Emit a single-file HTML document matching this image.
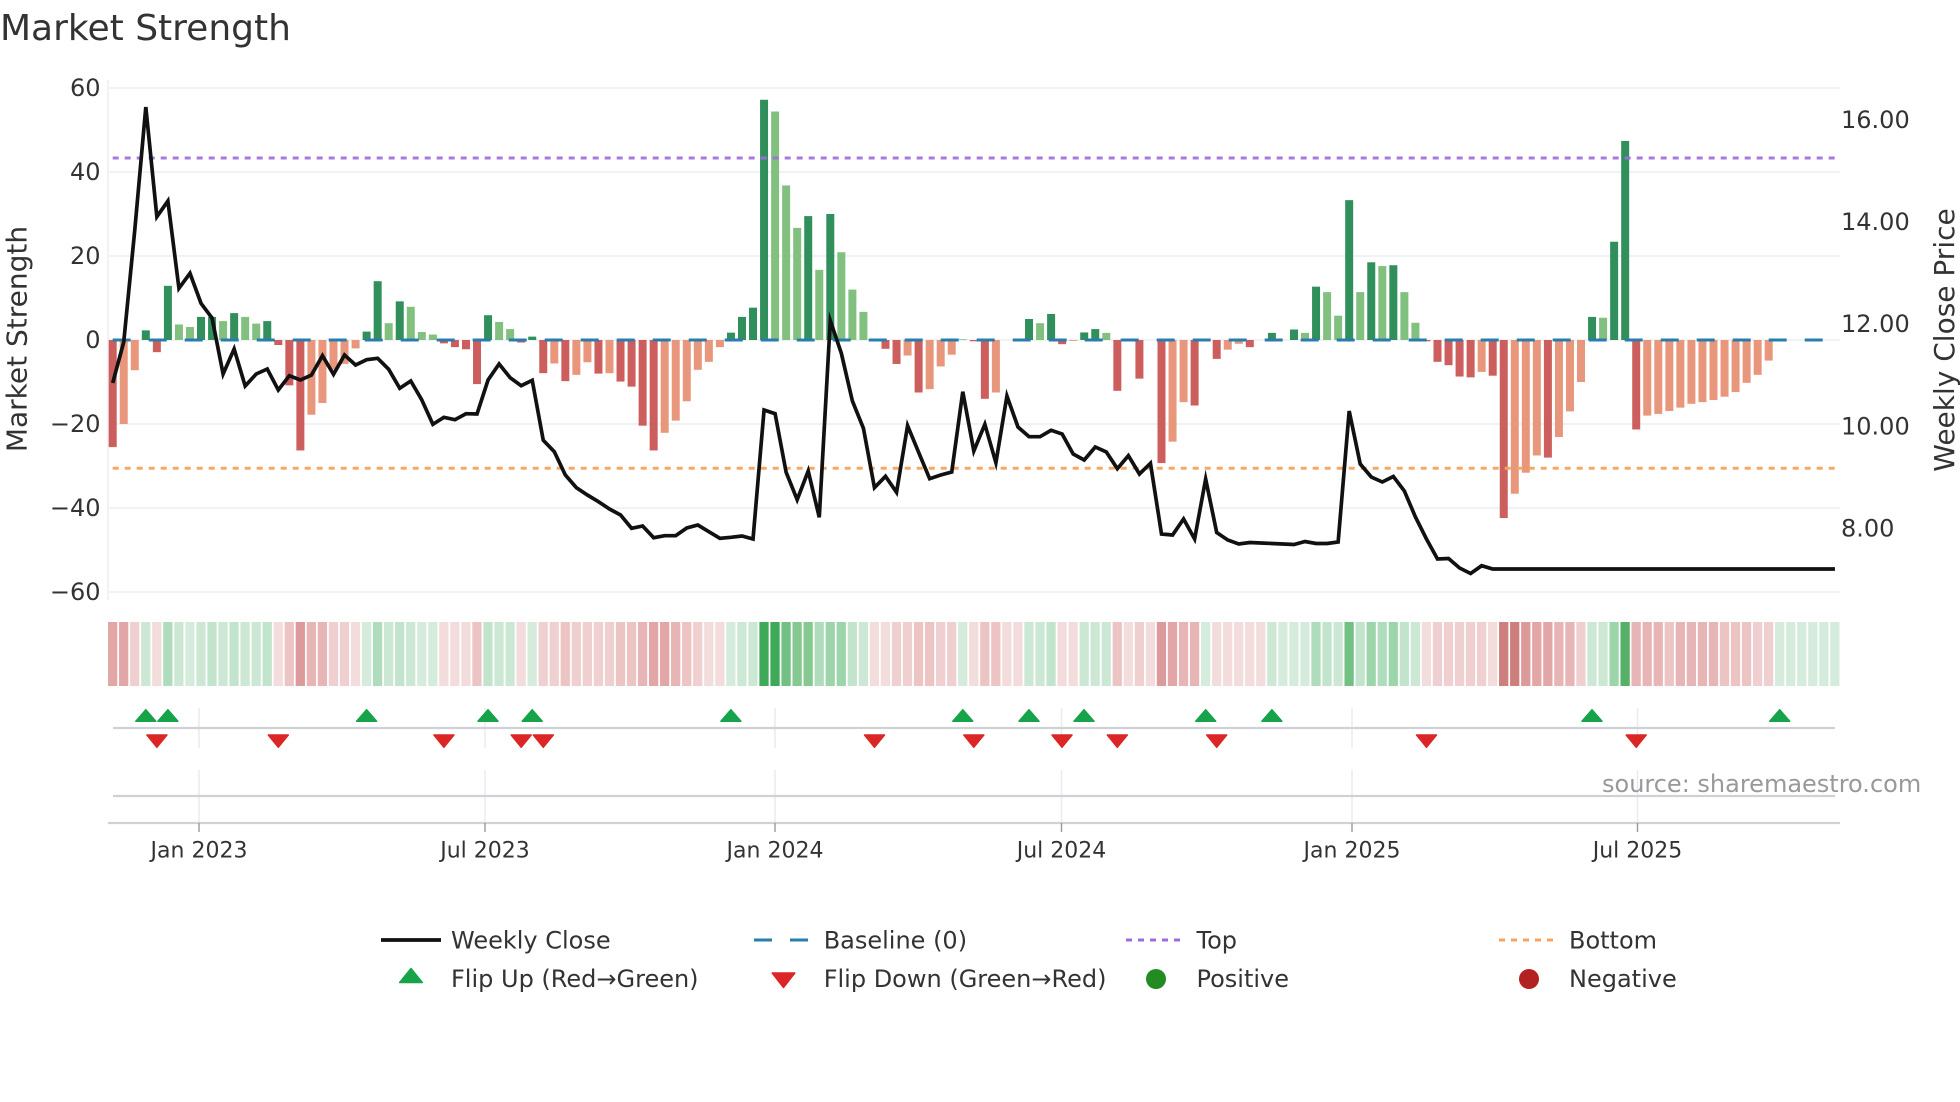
<!DOCTYPE html>
<html>
<head>
<meta charset="utf-8">
<title>Market Strength</title>
<style>
html,body{margin:0;padding:0;background:#fff;width:1960px;height:1102px;overflow:hidden}
svg{display:block;font-family:"DejaVu Sans","Liberation Sans",sans-serif}
text{fill:#333}
.bars rect{width:.7246px}
.r{fill:#cc5e5e}.o{fill:#e8977c}.g{fill:#318f5c}.l{fill:#82c080}
.s rect{width:.84px;height:1px}
.s .a{fill:#f3dcdc}.s .b{fill:#efcfcf}.s .c{fill:#ecc4c4}.s .d{fill:#e7b5b5}.s .e{fill:#e2a6a6}.s .f{fill:#dc9a9a}.s .h{fill:#cc7f7c}
.s .p{fill:#d5ecdd}.s .q{fill:#cce8d5}.s .u{fill:#c2e4cd}.s .w{fill:#aedcbc}.s .t{fill:#9dd5ab}.s .y{fill:#85c890}.s .v{fill:#72c083}.s .z{fill:#56b068}.s .x{fill:#3fa95a}
.yt{font-size:24px;text-anchor:end}
.rt{font-size:24px}
.xt{font-size:22px;text-anchor:middle}
.lg{font-size:24px}
</style>
</head>
<body>
<svg width="1960" height="1102" viewBox="0 0 1960 1102" xmlns="http://www.w3.org/2000/svg">
<rect width="1960" height="1102" fill="#fff"/>
<text x="0" y="40" font-size="36">Market Strength</text>

<!-- grid -->
<g stroke="#f0f2f5" stroke-width="2.2" fill="none">
<path d="M108 88H1840M108 172H1840M108 256H1840M108 340H1840M108 424H1840M108 508H1840M108 592H1840"/>
<path d="M108 80V600"/>
</g>

<!-- bars -->
<g class="bars" transform="translate(108.7 340) scale(11.04 4.2)">
<g class="r">
<rect x="0" height="25.5"/><rect x="4" height="2.9"/><rect x="15" height="1.2"/><rect x="16" height="10.8"/><rect x="17" height="26.3"/><rect x="30" height=".8"/><rect x="31" height="1.7"/><rect x="32" height="2.2"/><rect x="33" height="10.5"/><rect x="37" height=".6"/><rect x="39" height="7.9"/><rect x="41" height="9.8"/><rect x="44" height="8"/><rect x="46" height="9.9"/><rect x="47" height="11.1"/><rect x="48" height="20.4"/><rect x="49" height="26.3"/><rect x="70" height="2.1"/><rect x="71" height="5.7"/><rect x="73" height="12.5"/><rect x="78" height=".3"/><rect x="79" height="14"/><rect x="86" height="1"/><rect x="91" height="12.1"/><rect x="93" height="9.2"/><rect x="95" height="29.3"/><rect x="98" height="15.6"/><rect x="100" height="4.5"/><rect x="103" height="1.7"/><rect x="119" height=".3"/><rect x="120" height="5.2"/><rect x="121" height="6"/><rect x="122" height="8.7"/><rect x="123" height="8.9"/><rect x="125" height="8.5"/><rect x="126" height="42.4"/><rect x="130" height="28"/><rect x="138" height="21.3"/>
</g>
<g class="o">
<rect x="1" height="20"/><rect x="2" height="7.2"/><rect x="18" height="17.8"/><rect x="19" height="15"/><rect x="20" height="7"/><rect x="21" height="5.7"/><rect x="22" height="2"/><rect x="40" height="5.6"/><rect x="42" height="8.3"/><rect x="43" height="5.3"/><rect x="45" height="7.9"/><rect x="50" height="22.1"/><rect x="51" height="19.2"/><rect x="52" height="14.6"/><rect x="53" height="7.1"/><rect x="54" height="5.2"/><rect x="55" height="1.7"/><rect x="72" height="3.7"/><rect x="74" height="11.7"/><rect x="75" height="6.3"/><rect x="76" height="3.5"/><rect x="80" height="12.5"/><rect x="87" height=".2"/><rect x="96" height="24.2"/><rect x="97" height="14.8"/><rect x="101" height="2.3"/><rect x="102" height=".9"/><rect x="124" height="7.6"/><rect x="127" height="36.6"/><rect x="128" height="31.6"/><rect x="129" height="27.5"/><rect x="131" height="23.1"/><rect x="132" height="17"/><rect x="133" height="10"/><rect x="139" height="18"/><rect x="140" height="17.6"/><rect x="141" height="16.9"/><rect x="142" height="16.1"/><rect x="143" height="15.2"/><rect x="144" height="14.8"/><rect x="145" height="14.3"/><rect x="146" height="13.5"/><rect x="147" height="12.4"/><rect x="148" height="10.2"/><rect x="149" height="8.3"/><rect x="150" height="4.9"/>
</g>
<g transform="scale(1 -1)">
<g class="g">
<rect x="3" height="2.3"/><rect x="5" height="12.9"/><rect x="8" height="5.5"/><rect x="9" height="5.5"/><rect x="11" height="6.4"/><rect x="14" height="4.5"/><rect x="23" height="2"/><rect x="24" height="14"/><rect x="26" height="9.2"/><rect x="34" height="5.9"/><rect x="38" height=".8"/><rect x="56" height="1.75"/><rect x="57" height="5.5"/><rect x="58" height="7.7"/><rect x="59" height="57.2"/><rect x="63" height="29.5"/><rect x="65" height="30"/><rect x="77" height=".1"/><rect x="83" height="5"/><rect x="85" height="6.2"/><rect x="88" height="1.8"/><rect x="89" height="2.6"/><rect x="99" height=".3"/><rect x="105" height="1.7"/><rect x="107" height="2.5"/><rect x="109" height="12.7"/><rect x="112" height="33.3"/><rect x="114" height="18.5"/><rect x="116" height="17.8"/><rect x="134" height="5.5"/><rect x="136" height="23.4"/><rect x="137" height="47.4"/>
</g>
<g class="l">
<rect x="6" height="3.7"/><rect x="7" height="3.1"/><rect x="10" height="4.5"/><rect x="12" height="5.5"/><rect x="13" height="3.9"/><rect x="25" height="4"/><rect x="27" height="7.9"/><rect x="28" height="1.9"/><rect x="29" height="1.3"/><rect x="35" height="4.3"/><rect x="36" height="2.6"/><rect x="60" height="54.4"/><rect x="61" height="36.8"/><rect x="62" height="26.7"/><rect x="64" height="16.7"/><rect x="66" height="20.9"/><rect x="67" height="12"/><rect x="68" height="6.7"/><rect x="84" height="4"/><rect x="90" height="1.7"/><rect x="108" height="1.7"/><rect x="110" height="11.4"/><rect x="111" height="5.8"/><rect x="113" height="11.4"/><rect x="115" height="17.6"/><rect x="117" height="11.4"/><rect x="118" height="4.1"/><rect x="135" height="5.3"/>
</g>
</g>
</g>

<!-- baseline + top/bottom -->
<path d="M112.7 340H1835" stroke="#2a7cab" stroke-width="3" stroke-dasharray="18 18" fill="none"/>
<path d="M112.7 158H1835" stroke="#9f6ddb" stroke-width="3" stroke-dasharray="6 6" fill="none" opacity=".92"/>
<path d="M112.7 468.3H1835" stroke="#f4a460" stroke-width="3" stroke-dasharray="6 6" fill="none" opacity=".95"/>

<!-- weekly close -->
<g transform="translate(112.7 0) scale(11.04 1)">
<polyline fill="none" stroke="#111" stroke-width="3.7" stroke-linejoin="miter" stroke-miterlimit="6" vector-effect="non-scaling-stroke" points="0,383 1,342 2,230 3,107 4,216.7 5,201 6,288.3 7,273.3 8,303.3 9,318 10,374 11,349 12,386 13,374 14,369 15,390 16,375.7 17,380 18,375 19,355.7 20,374.3 21,355 22,365 23,359.7 24,358.3 25,369.3 26,388.3 27,381 28,400 29,424.3 30,417.3 31,419.7 32,413.7 33,414 34,380 35,364 36,377.7 37,385.7 38,380.3 39,440.3 40,451.7 41,475 42,487.7 43,495 44,501.7 45,509 46,515 47,528.3 48,526 49,537.7 50,535.7 51,535.7 52,528 53,525 54,531.7 55,538.3 56,537.3 57,536 58,539 59,410 60,413.7 61,472.3 62,499.7 63,471 64,517.3 65,320.7 66,353.3 67,401 68,428.3 69,487.7 70,476.3 71,492.3 72,425.7 73,452.3 74,478.7 75,475 76,472 77,391.7 78,451 79,424.3 80,462.7 81,396 82,427 83,436.7 84,436.7 85,430.3 86,434 87,454 88,460 89,447 90,452 91,468.7 92,455.7 93,474 94,463.3 95,534 96,535 97,519 98,539 99,479 100,532.5 101,540 102,544 103,542.5 104,543 105,543.5 106,544 107,544.5 108,541.5 109,543.5 110,543.5 111,542 112,411 113,464 114,477 115,482 116,476.5 117,491 118,517 119,539 120,559 121,558.5 122,568 123,573.5 124,565.7 125,569 126,569 156,569"/>
</g>

<!-- y ticks -->
<g class="yt">
<text x="100.5" y="96">60</text>
<text x="100.5" y="180">40</text>
<text x="100.5" y="264">20</text>
<text x="100.5" y="348">0</text>
<text x="100.5" y="432">−20</text>
<text x="100.5" y="516">−40</text>
<text x="100.5" y="600">−60</text>
</g>
<g class="rt">
<text x="1841" y="128">16.00</text>
<text x="1841" y="230">14.00</text>
<text x="1841" y="332">12.00</text>
<text x="1841" y="434.5">10.00</text>
<text x="1841" y="536.7">8.00</text>
</g>
<text transform="translate(26.7 339) rotate(-90)" font-size="28" text-anchor="middle">Market Strength</text>
<text transform="translate(1954 340) rotate(-90)" font-size="28" text-anchor="middle">Weekly Close Price</text>

<!-- strip -->
<g class="s" transform="translate(108 622) scale(11.04 64)">
<rect x="0" class="e"/><rect x="1" class="e"/><rect x="2" class="b"/><rect x="3" class="q"/><rect x="4" class="a"/><rect x="5" class="w"/><rect x="6" class="q"/><rect x="7" class="p"/><rect x="8" class="q"/><rect x="9" class="u"/><rect x="10" class="q"/><rect x="11" class="u"/><rect x="12" class="q"/><rect x="13" class="q"/><rect x="14" class="u"/><rect x="15" class="a"/><rect x="16" class="c"/><rect x="17" class="f"/><rect x="18" class="d"/><rect x="19" class="d"/>
<rect x="20" class="b"/><rect x="21" class="b"/><rect x="22" class="a"/><rect x="23" class="p"/><rect x="24" class="w"/><rect x="25" class="q"/><rect x="26" class="u"/><rect x="27" class="q"/><rect x="28" class="p"/><rect x="29" class="p"/><rect x="30" class="a"/><rect x="31" class="a"/><rect x="32" class="a"/><rect x="33" class="c"/><rect x="34" class="u"/><rect x="35" class="q"/><rect x="36" class="q"/><rect x="37" class="a"/><rect x="38" class="p"/><rect x="39" class="b"/>
<rect x="40" class="b"/><rect x="41" class="c"/><rect x="42" class="b"/><rect x="43" class="b"/><rect x="44" class="b"/><rect x="45" class="b"/><rect x="46" class="c"/><rect x="47" class="c"/><rect x="48" class="d"/><rect x="49" class="e"/><rect x="50" class="e"/><rect x="51" class="d"/><rect x="52" class="c"/><rect x="53" class="b"/><rect x="54" class="a"/><rect x="55" class="a"/><rect x="56" class="p"/><rect x="57" class="q"/><rect x="58" class="q"/><rect x="59" class="x"/>
<rect x="60" class="x"/><rect x="61" class="v"/><rect x="62" class="y"/><rect x="63" class="y"/><rect x="64" class="w"/><rect x="65" class="t"/><rect x="66" class="t"/><rect x="67" class="u"/><rect x="68" class="q"/><rect x="69" class="a"/><rect x="70" class="a"/><rect x="71" class="b"/><rect x="72" class="b"/><rect x="73" class="c"/><rect x="74" class="c"/><rect x="75" class="b"/><rect x="76" class="b"/><rect x="77" class="p"/><rect x="78" class="a"/><rect x="79" class="c"/>
<rect x="80" class="c"/><rect x="81" class="a"/><rect x="82" class="a"/><rect x="83" class="q"/><rect x="84" class="q"/><rect x="85" class="u"/><rect x="86" class="a"/><rect x="87" class="a"/><rect x="88" class="q"/><rect x="89" class="q"/><rect x="90" class="q"/><rect x="91" class="c"/><rect x="92" class="a"/><rect x="93" class="b"/><rect x="94" class="a"/><rect x="95" class="f"/><rect x="96" class="e"/><rect x="97" class="d"/><rect x="98" class="d"/><rect x="99" class="p"/>
<rect x="100" class="a"/><rect x="101" class="a"/><rect x="102" class="a"/><rect x="103" class="a"/><rect x="104" class="a"/><rect x="105" class="q"/><rect x="106" class="p"/><rect x="107" class="p"/><rect x="108" class="p"/><rect x="109" class="w"/><rect x="110" class="u"/><rect x="111" class="q"/><rect x="112" class="v"/><rect x="113" class="u"/><rect x="114" class="t"/><rect x="115" class="w"/><rect x="116" class="t"/><rect x="117" class="u"/><rect x="118" class="q"/><rect x="119" class="a"/>
<rect x="120" class="b"/><rect x="121" class="b"/><rect x="122" class="b"/><rect x="123" class="b"/><rect x="124" class="b"/><rect x="125" class="a"/><rect x="126" class="h"/><rect x="127" class="h"/><rect x="128" class="f"/><rect x="129" class="e"/><rect x="130" class="e"/><rect x="131" class="d"/><rect x="132" class="d"/><rect x="133" class="b"/><rect x="134" class="q"/><rect x="135" class="q"/><rect x="136" class="t"/><rect x="137" class="z"/><rect x="138" class="d"/><rect x="139" class="d"/>
<rect x="140" class="d"/><rect x="141" class="c"/><rect x="142" class="d"/><rect x="143" class="d"/><rect x="144" class="d"/><rect x="145" class="d"/><rect x="146" class="c"/><rect x="147" class="c"/><rect x="148" class="c"/><rect x="149" class="b"/><rect x="150" class="b"/><rect x="151" class="p"/><rect x="152" class="p"/><rect x="153" class="p"/><rect x="154" class="p"/><rect x="155" class="p"/><rect x="156" class="p"/>
</g>

<!-- flip panel -->
<g stroke="#e8ebef" stroke-width="1.5" fill="none">
<path d="M199 708V748M199 770V823M485 708V748M485 770V823M775 708V748M775 770V823M1061.5 708V748M1061.5 770V823M1352 708V748M1352 770V823M1637.5 708V748M1637.5 770V823"/>
</g>
<path d="M113 728H1835M113 796H1835M108 823H1840" stroke="#d0d1d4" stroke-width="2.2" fill="none"/>
<path d="M199 823V832M485 823V832M775 823V832M1061.5 823V832M1352 823V832M1637.5 823V832" stroke="#999" stroke-width="1.4" fill="none"/>
<path fill="#16a34a" stroke="#16a34a" stroke-width="1.5" stroke-linejoin="round" d="M145.8 709.7l10 11.5h-20zM167.9 709.7l10 11.5h-20zM366.6 709.7l10 11.5h-20zM488 709.7l10 11.5h-20zM532.2 709.7l10 11.5h-20zM730.9 709.7l10 11.5h-20zM962.8 709.7l10 11.5h-20zM1029 709.7l10 11.5h-20zM1084 709.7l10 11.5h-20zM1205.7 709.7l10 11.5h-20zM1271.9 709.7l10 11.5h-20zM1592 709.7l10 11.5h-20zM1779.7 709.7l10 11.5h-20z"/>
<path fill="#dc2626" stroke="#dc2626" stroke-width="1.5" stroke-linejoin="round" d="M156.9 747.3l10-12.3h-20zM278.3 747.3l10-12.3h-20zM443.9 747.3l10-12.3h-20zM521.2 747.3l10-12.3h-20zM543.3 747.3l10-12.3h-20zM874.5 747.3l10-12.3h-20zM973.8 747.3l10-12.3h-20zM1062 747.3l10-12.3h-20zM1117.3 747.3l10-12.3h-20zM1216.7 747.3l10-12.3h-20zM1426.5 747.3l10-12.3h-20zM1636.2 747.3l10-12.3h-20z"/>

<text x="1602" y="792" font-size="24" style="fill:#999">source: sharemaestro.com</text>

<g class="xt">
<text x="199" y="857.5">Jan 2023</text>
<text x="485" y="857.5">Jul 2023</text>
<text x="775" y="857.5">Jan 2024</text>
<text x="1061.5" y="857.5">Jul 2024</text>
<text x="1352" y="857.5">Jan 2025</text>
<text x="1637.5" y="857.5">Jul 2025</text>
</g>

<!-- legend -->
<path d="M381 940H441" stroke="#111" stroke-width="3.7" fill="none"/>
<path d="M754 940H772M790 940H808" stroke="#2a7cab" stroke-width="3" fill="none"/>
<path d="M1126 940H1182" stroke="#9f6ddb" stroke-width="3" stroke-dasharray="6 6" fill="none"/>
<path d="M1499 940H1556" stroke="#f4a460" stroke-width="3" stroke-dasharray="6 6" fill="none"/>
<path d="M411 968.5l11.3 14h-22.6z" fill="#16a34a" stroke="#16a34a" stroke-width="1.5" stroke-linejoin="round"/>
<path d="M783.5 987.5l11.3-14.5h-22.6z" fill="#dc2626" stroke="#dc2626" stroke-width="1.5" stroke-linejoin="round"/>
<circle cx="1156" cy="979" r="10" fill="#228b22"/>
<circle cx="1529" cy="979" r="10" fill="#b22222"/>
<g class="lg">
<text x="451" y="948.5">Weekly Close</text>
<text x="823.7" y="948.5">Baseline (0)</text>
<text x="1196.5" y="948.5">Top</text>
<text x="1569" y="948.5">Bottom</text>
<text x="451" y="987">Flip Up (Red→Green)</text>
<text x="823.7" y="987">Flip Down (Green→Red)</text>
<text x="1196.5" y="987">Positive</text>
<text x="1569" y="987">Negative</text>
</g>
</svg>
</body>
</html>
